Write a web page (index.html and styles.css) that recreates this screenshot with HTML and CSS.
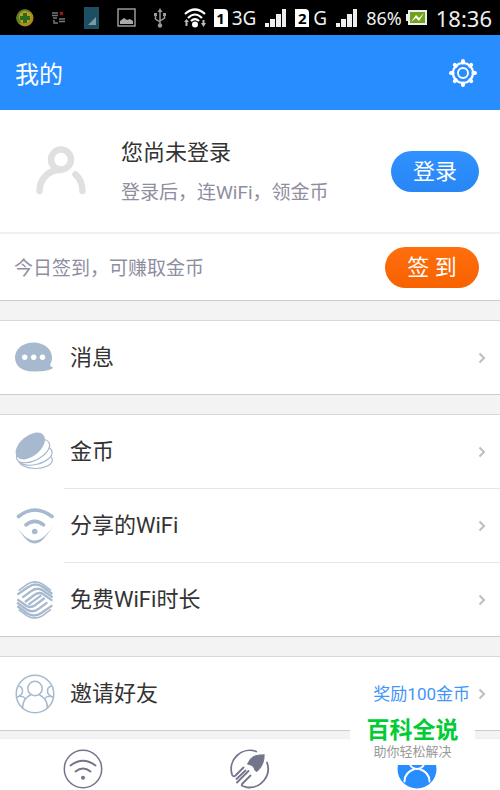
FILE: index.html
```html
<!DOCTYPE html>
<html lang="zh-CN">
<head>
<meta charset="utf-8">
<meta name="viewport" content="width=device-width, initial-scale=1">
<title>我的</title>
<link rel="stylesheet" href="styles.css">
</head>
<body>
<div class="status">
  <div class="status-notes">
    <svg width="18" height="18" viewBox="0 0 18 18"><circle cx="9" cy="9" r="8.500" fill="#a88c1c"/><path d="M1 6a8.500 8.500 0 0 1 13-4L3 15A8 8 0 0 1 1 6z" fill="#607c24"/><circle cx="9" cy="8" r="6" fill="#b5a126"/><path d="M7 4h4v3h3v4h-3v3H7v-3H4V7h3z" fill="#2c6b1c"/></svg>
    <svg width="14" height="14" viewBox="0 0 14 14"><path d="M0 2h6M0 4.500h6M1 7h4M7 8h6M7 10.500h6M2 9v3h4" fill="none" stroke="#777" stroke-width="1.500"/><path d="M8 1l3 3M11 1L8 4" stroke="#a22" stroke-width="1.300"/></svg>
    <svg width="15" height="22" viewBox="0 0 15 22"><path d="M0 0h15v22H0z" fill="#1d4e62"/><path d="M12 10v8H4z" fill="#7c98a3"/></svg>
    <svg width="19" height="19" viewBox="0 0 19 19"><path d="M1 1h17v17H1z" fill="none" stroke="#999" stroke-width="1.500"/><path d="M3 16v-3l4-3 3 2 3-1 3 2v3z" fill="#aaa"/></svg>
    <svg width="12" height="20" viewBox="0 0 12 20"><path d="M6 2v16M1.500 7v4L6 14M10.500 6v4L6 13" fill="none" stroke="#999" stroke-width="1.500"/><path d="M6 0l2.500 4h-5zM0 5h3v3H0zM9 5h3v3H9z" fill="#999"/><circle cx="6" cy="17.500" r="2.200" fill="#999"/></svg>
    <svg width="22" height="20" viewBox="0 0 22 20"><path d="M1 6Q11-3 21 6M4 10q7-7 14 0M7 13q4-4 8 0" fill="none" stroke="#fff" stroke-width="2.200"/><circle cx="11" cy="16.500" r="3" fill="#fff"/><path d="M0 14l2.500-3L5 14H3.500v4h-2v-4zM17 15l2.500 4 2.500-4h-1.500v-3h-2v3z" fill="#bbb"/></svg>
  </div>
  <div class="status-info">
    <span class="sim-group"><span class="sim">1</span><span class="net">3G</span></span>
    <svg width="21" height="18" viewBox="0 0 21 18"><path d="M0 14h4v4H0zM5 10h5v8H5zM11 5h5v13h-5zM17 0h4v18h-4z" fill="#eee"/></svg>
    <span class="sim-group"><span class="sim">2</span><span class="net">G</span></span>
    <svg width="21" height="18" viewBox="0 0 21 18"><path d="M0 14h4v4H0zM5 10h5v8H5zM11 5h5v13h-5zM17 0h4v18h-4z" fill="#eee"/></svg>
    <span class="sim-group"><span class="percent">86%</span>
    <svg width="21" height="15" viewBox="0 0 21 15"><path d="M0 4h2V0h19v15H2v-4H0z" fill="#eee"/><path d="M4 2h15v11H4z" fill="#6fa31c"/><path d="M5 12l5-7 3 3 5-5-5 8-3-3z" fill="#fff"/></svg></span>
    <time class="clock">18:36</time>
  </div>
</div>

<header class="header">
  <h1 class="title">我的</h1>
  <button class="settings" type="button" aria-label="设置">
    <svg width="28" height="28" viewBox="0 0 28 28" fill="none" stroke="#fff"><circle cx="14" cy="14" r="10" stroke-width="2.200"/><circle cx="14" cy="14" r="5" stroke-width="1.900"/><path d="M14 2v1.500M14 24.500v1.500M2 14h1.500M24.500 14h1.500M5.800 5.800l1 1M21.200 21.200l1 1M5.800 22.200l1-1M21.200 6.800l1-1" stroke-width="4" stroke-linecap="round"/></svg>
  </button>
</header>

<main class="content">
  <section class="account">
    <div class="profile">
      <svg class="avatar" width="50" height="50" viewBox="0 0 50 50" fill="none" stroke="#e0e0e0" stroke-width="6.500" stroke-linecap="round"><circle cx="25" cy="13.500" r="10"/><path d="M3.500 45C3.500 33.500 12 24 24 24M39.500 28.500c4.500 4 7 10 7 16.500"/></svg>
      <div class="profile-text">
        <h2 class="name">您尚未登录</h2>
        <p class="hint">登录后，连WiFi，领金币</p>
      </div>
      <button class="pill login" type="button">登录</button>
    </div>
    <div class="checkin">
      <p class="hint">今日签到，可赚取金币</p>
      <button class="pill sign" type="button">签 到</button>
    </div>
  </section>

  <nav class="group">
    <a class="row" href="#messages">
      <svg class="icon" viewBox="0 0 42 40"><path d="M19.500 4.500C9 4.500 1 11 1 19.500 1 28 8 33.500 19 33.500c9 0 17-.5 20.500-4-2 0-3-1-3.500-3 1.500-2 2-4.500 2-7C38 11 30 4.500 19.500 4.500z" fill="#a6b9ce"/><g fill="#fff"><circle cx="10.700" cy="19.300" r="2.700"/><circle cx="19.700" cy="19.300" r="2.700"/><circle cx="28.500" cy="19.300" r="2.700"/></g></svg>
      <span class="body"><span class="label">消息</span><svg class="arrow" viewBox="0 0 8 12"><path d="M1.500 1.500L6 6l-4.500 4.500"/></svg></span>
    </a>
  </nav>

  <nav class="group">
    <a class="row" href="#coins">
      <svg class="icon" viewBox="0 0 42 40" fill="#fff" stroke="#a6b9ce" stroke-width="1.200"><ellipse cx="21.500" cy="28" rx="16.800" ry="8.500"/><ellipse cx="21" cy="23.500" rx="17.500" ry="9" transform="rotate(-14 21 23.500)"/><ellipse cx="19" cy="19" rx="18" ry="9.500" transform="rotate(-27 19 19)"/><ellipse cx="16.300" cy="14" rx="16.500" ry="9.500" transform="rotate(-40 16.300 14)" fill="#a6b9ce"/></svg>
      <span class="body"><span class="label">金币</span><svg class="arrow" viewBox="0 0 8 12"><path d="M1.500 1.500L6 6l-4.500 4.500"/></svg></span>
    </a>
    <a class="row" href="#shared">
      <svg class="icon" viewBox="0 0 42 40"><g fill="none" stroke="#a6b9ce" stroke-width="3.600" stroke-linecap="round"><path d="M4.500 10.500Q20.700-2.500 38 10.500M12 18.800q8.700-7 17.500 0"/></g><circle cx="20.700" cy="25.500" r="2.800" fill="#a6b9ce"/><path d="M1 19C8 28 13 37.500 20.700 37.500S33 28 40.700 19C33 28 28 34.500 20.700 34.500S8 28 1 19z" fill="#a6b9ce"/></svg>
      <span class="body"><span class="label">分享的WiFi</span><svg class="arrow" viewBox="0 0 8 12"><path d="M1.500 1.500L6 6l-4.500 4.500"/></svg></span>
    </a>
    <a class="row" href="#duration">
      <svg class="icon" viewBox="27 27 126 120" fill="none" stroke="#a6b9ce"><defs><g id="wave"><path d="M41 59L66 40Q90 25 114 40L138 58" stroke-width="5"/><path d="M37 71L70 48Q92 33 114 48L142 69" stroke-width="7"/><path d="M52 80L76 62Q96 46 115 59L143 79" stroke-width="7"/><path d="M60 93L88 72Q102 62 114 69L142 89" stroke-width="7"/></g></defs><use href="#wave"/><use href="#wave" transform="rotate(180 89.500 87)"/><path d="M70 101L109 73" stroke-width="7"/></svg>
      <span class="body"><span class="label">免费WiFi时长</span><svg class="arrow" viewBox="0 0 8 12"><path d="M1.500 1.500L6 6l-4.500 4.500"/></svg></span>
    </a>
  </nav>

  <nav class="group">
    <a class="row" href="#invite">
      <svg class="icon" viewBox="0 0 42 40" fill="none" stroke="#a6b9ce" stroke-width="1.500"><circle cx="21" cy="20" r="18.800"/><circle cx="21" cy="14.500" r="7.200"/><path d="M8.500 34.500C8.500 28 12 23 17 20.500M33.500 34.500C33.500 28 30 23 25 20.500M4.500 12c5 1 5.500 8 .5 10M37.500 12c-5 1-5.500 8-.5 10M2.500 23.500q5-3 9.500 1.500M39.500 23.500q-5-3-9.500 1.500"/></svg>
      <span class="body"><span class="label">邀请好友</span><span class="reward">奖励100金币</span><svg class="arrow" viewBox="0 0 8 12"><path d="M1.500 1.500L6 6l-4.500 4.500"/></svg></span>
    </a>
  </nav>
</main>

<nav class="tabs">
  <a class="tab" href="#wifi" aria-label="WiFi"><svg width="40" height="40" viewBox="0 0 40 40" fill="none" stroke="#73758a" stroke-width="2" stroke-linecap="round"><circle cx="20" cy="20" r="18.700" stroke-width="1.500"/><path d="M7.500 16.500q12.500-9.500 25 0M12.500 22.500q7.500-6 15 0"/><circle cx="20" cy="28.800" r="1" fill="#73758a"/></svg></a>
  <a class="tab" href="#boost" aria-label="加速"><svg width="40" height="40" viewBox="0 0 40 40" fill="none" stroke="#73758a" stroke-width="1.800" stroke-linecap="round" stroke-linejoin="round"><path d="M26.300 2.500A18.700 18.700 0 0 0 2 25.500Q3 28.500 5.500 26.500L13.500 18.500M37 13.500A18.700 18.700 0 0 1 17 38.300L12.500 37Q11 36 12.500 34.500L20.500 26.500M6.500 30L15.500 21.500M7 33.500L18.500 22"/><path d="M34 6C28 5.500 23 7 20.500 10L17.500 15l3.500 1q3.500 1.500 4 5.500l2 1C32 18 34.500 12 34 6z" fill="#73758a" stroke-width="1"/></svg></a>
  <a class="tab" href="#me" aria-label="我的"><svg width="40" height="40" viewBox="0 0 40 40"><circle cx="20" cy="20" r="19.500" fill="#288dff"/><path d="M7.500 32.500c0-6 4-10.500 10-12.500M32.500 32.500c0-6-4-10.500-10-12.500" fill="none" stroke="#fff" stroke-width="2" stroke-linecap="round"/><circle cx="20" cy="12" r="8" fill="none" stroke="#fff" stroke-width="2"/></svg></a>
</nav>

<aside class="stamp"><strong class="stamp-name">百科全说</strong><span class="stamp-line">助你轻松解决</span></aside>
</body>
</html>
```
FILE: styles.css
```css
* { box-sizing: border-box; }
body {
  margin: 0;
  background: #f3f3f3;
  color: #333;
  font-family: Roboto, "Noto Sans CJK SC", sans-serif;
  padding-bottom: 51px;
}
h1, h2, p { margin: 0; font-weight: 400; }
a { color: inherit; text-decoration: none; }
button { border: 0; padding: 0; font: inherit; color: #fff; }
svg { display: block; flex: none; }

.status {
  display: flex;
  align-items: center;
  justify-content: space-between;
  height: 35px;
  padding: 0 8px 0 16px;
  background: #000;
  color: #eee;
  font-family: "Noto Sans", sans-serif;
}
.status-notes { display: flex; align-items: center; gap: 18px; }
.status-info { display: flex; align-items: center; gap: 9px; }
.sim-group { display: flex; align-items: center; gap: 4px; }
.sim {
  width: 14px;
  background: #fff;
  color: #000;
  border-top-right-radius: 4px;
  font-size: 15px;
  font-weight: 700;
  line-height: 18px;
  text-align: center;
}
.net { font-size: 19px; }
.percent { font-size: 18px; }
.clock { font-size: 22px; }

.header {
  display: flex;
  align-items: center;
  justify-content: space-between;
  height: 75px;
  padding: 0 23px 0 15px;
  background: #288dff;
  color: #fff;
}
.title { padding-top: 4px; font-size: 24px; line-height: 36px; }
.settings { background: none; }

.content { display: flex; flex-direction: column; gap: 20px; }
.account, .group { background: #fff; box-shadow: 0 1px 0 #ccc; }
.profile {
  display: flex;
  align-items: center;
  height: 124px;
  padding: 0 21px 0 36px;
  border-bottom: 2px solid #f0f0f0;
}
.avatar { margin-right: 35px; }
.profile-text { flex: 1; display: flex; flex-direction: column; gap: 8px; }
.name, .hint { padding-top: 4px; }
.name { font-size: 22px; line-height: 28px; }
.hint { color: #8e8e9f; font-size: 19px; line-height: 28px; }
.pill { height: 41px; padding-top: 2px; border-radius: 21px; font-size: 22px; line-height: 32px; }
.login { width: 88px; background: linear-gradient(#3091ff, #2886f5); }
.sign { width: 94px; background: linear-gradient(#ff6e0d, #f86200); }
.checkin {
  display: flex;
  align-items: center;
  justify-content: space-between;
  height: 66px;
  padding: 0 21px 0 14px;
}

.group { border-top: 1px solid #d8d8d8; }
.row { display: flex; align-items: center; padding-left: 14px; }
.icon { width: 42px; height: 40px; margin-right: 8px; }
.body {
  flex: 1;
  display: flex;
  align-items: center;
  height: 73px;
  padding: 0 14px 0 6px;
  line-height: 32px;
}
.row:not(:last-child) .body { height: 74px; border-bottom: 1px solid #e6e6e6; }
.label { flex: 1; font-size: 22px; }
.reward { margin-right: 8px; color: #3f96fa; font-size: 17px; }
.arrow { width: 8px; height: 12px; fill: none; stroke: #bcbcc6; stroke-width: 2; }

.tabs {
  position: fixed;
  left: 0;
  right: 0;
  bottom: 0;
  display: flex;
  height: 51px;
  padding-top: 10px;
  background: #fff;
  box-shadow: 0 0 1px #ddd;
}
.tab { flex: 1; display: flex; justify-content: center; }

.stamp {
  position: fixed;
  right: 25px;
  bottom: 25px;
  display: flex;
  flex-direction: column;
  align-items: center;
  width: 125px;
  padding: 4px 0;
  background: #fff;
}
.stamp-name { color: #0c3; font-size: 23px; font-weight: 700; line-height: 24px; }
.stamp-line { color: #999; font-size: 13px; line-height: 18px; }
```
